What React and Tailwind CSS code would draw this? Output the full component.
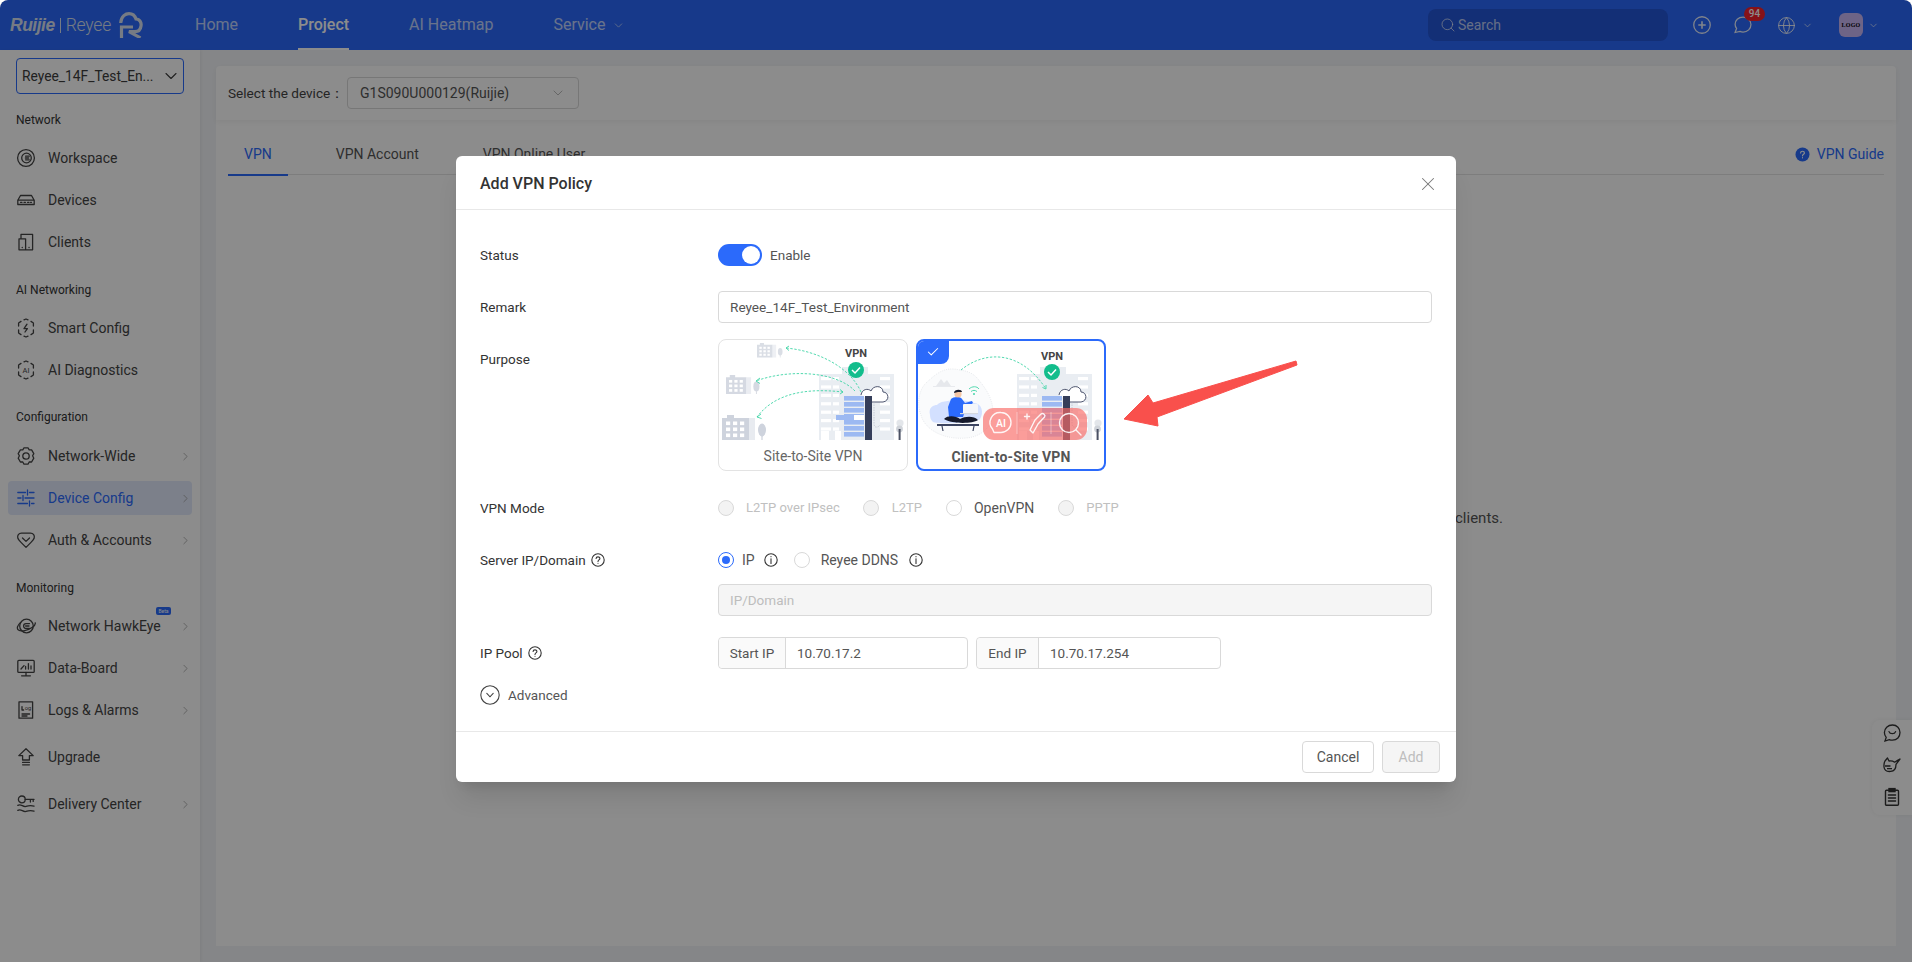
import React from "react";
import { ChevronDown, ChevronRight, Search, X, Check, Globe } from "lucide-react";

const S = ({ children, size = 20 }) => (
  <svg width={size} height={size} viewBox="0 0 20 20" fill="none" stroke="currentColor" strokeWidth="1.3" strokeLinecap="round" strokeLinejoin="round">
    {children}
  </svg>
);

const Hex = ({ children }) => (
  <S>
    <path d="M8 1.8 L10 1 L12 1.8 M15 3.4 L17.4 5 V8 M17.4 12 V15 L15 16.6 M12 18.2 L10 19 L8 18.2 M5 16.6 L2.6 15 V12 M2.6 8 V5 L5 3.4" />
    {children}
  </S>
);

const icons = {
  workspace: (
    <S>
      <circle cx="10" cy="10" r="8.4" />
      <circle cx="10.5" cy="10" r="4.8" />
      <path d="M13.3 8.2 H9.6 M9.4 10 H12.6 M9.6 11.8 H13.3" />
    </S>
  ),
  devices: (
    <S>
      <path d="M4.5 5.5 H15.5 L18.2 10.2 V14.5 H1.8 V10.2 Z M1.8 10.2 H18.2" />
      <path d="M4.5 12.3 H6 M8 12.3 H9.5 M11.5 12.3 H13 M14.5 12.3 H15.5" />
    </S>
  ),
  clients: (
    <S>
      <path d="M5 6 V2.4 H16.6 V17.8 H3 V6.8 H9.6 V17.8" />
      <path d="M6.2 15.5 H6.3 M13 15.5 H13.1" />
    </S>
  ),
  smart: (
    <Hex>
      <path d="M11 6.2 L8 10.6 H11.4 L9 14" />
    </Hex>
  ),
  ai: (
    <Hex>
      <text x="10" y="13" textAnchor="middle" fontSize="7.5" fontFamily="Roboto" stroke="none" fill="currentColor">AI</text>
    </Hex>
  ),
  gear: (
    <S>
      <path d="M8 1.8 H12 L13.2 3.9 L15.6 3.9 L17.8 7.6 L16.6 9.8 L17.8 12.2 L15.6 16 L13.2 16 L12 18.2 H8 L6.8 16 L4.4 16 L2.2 12.2 L3.4 9.8 L2.2 7.6 L4.4 3.9 L6.8 3.9 Z" />
      <circle cx="10" cy="10" r="3.2" />
    </S>
  ),
  sliders: (
    <S>
      <path d="M1.8 4.5 H9.5 M13.5 4.5 H18 M11.5 2 V7 M1.8 10 H5 M9 10 H18 M7 7.5 V12.5 M1.8 15.5 H11.5 M15.5 15.5 H18 M13.5 13 V18" />
    </S>
  ),
  auth: (
    <S>
      <path d="M5.5 3.2 C2.6 3.2 1.2 5.4 1.8 8 C2.2 9.6 3.6 11 5 12.4 L10 17.4 L15 12.4 C16.4 11 17.8 9.6 18.2 8 C18.8 5.4 17.4 3.2 14.5 3.2 Z" />
      <path d="M6.5 8 L10 11.4 L13.5 8" />
    </S>
  ),
  hawk: (
    <S>
      <circle cx="10.5" cy="10" r="6.8" />
      <path d="M13.5 7.6 H10 A2.4 2.4 0 0 0 10 12.4 H13.5 M9.6 10 H13" />
      <path d="M4.6 6.4 C1.4 9.4 0.4 12.6 2.4 14 C5 15.8 12 14.6 16 11.6 C18 10.2 19.6 8.2 19.2 6.8" />
    </S>
  ),
  board: (
    <S>
      <rect x="1.8" y="2.4" width="16.4" height="12" rx="1" />
      <path d="M10 14.4 V17.6 M5.6 17.8 H14.4 M5 11 L8 7.6 M9.6 11 V8.5 M12.4 11 V5.6 M15 11 V8" />
    </S>
  ),
  logs: (
    <S>
      <path d="M3 1.8 H16.6 V18.2 H3 Z" />
      <path d="M6 10 V6.6 M6 10 H7.6 M6 14 H13.6 M6 16 H11" />
      <text x="12" y="10" textAnchor="middle" fontSize="5.8" fontFamily="Roboto" stroke="none" fill="currentColor">og</text>
    </S>
  ),
  upgrade: (
    <S>
      <path d="M10 1.8 L17.2 8.6 H13.4 V13 H6.6 V8.6 H2.8 Z" />
      <path d="M6.6 15.4 H13.4 M6.6 17.8 H13.4" />
    </S>
  ),
  delivery: (
    <S>
      <circle cx="5.8" cy="5.4" r="3.4" />
      <path d="M9.2 5.4 H18 M14.4 5.4 V8 M17.2 5.4 V7.4" />
      <path d="M1.8 11.4 C5 9.4 7 13.4 10 12.4 C13 11.4 15 11.2 18 12.2 M1.8 16.4 C5 14.4 7 18.4 10 17.4 C13 16.4 15 16.2 18 17.2" />
    </S>
  ),
};

const nav = [
  { label: "Network", mt: "mt-[18px]" },
  { text: "Workspace", icon: "workspace", mt: "mt-[13px]" },
  { text: "Devices", icon: "devices", mt: "mt-2" },
  { text: "Clients", icon: "clients", mt: "mt-2" },
  { label: "AI Networking", mt: "mt-[23px]" },
  { text: "Smart Config", icon: "smart", mt: "mt-[13px]" },
  { text: "AI Diagnostics", icon: "ai", mt: "mt-2" },
  { label: "Configuration", mt: "mt-[22px]" },
  { text: "Network-Wide", icon: "gear", mt: "mt-[14px]", more: true },
  { text: "Device Config", icon: "sliders", mt: "mt-2", more: true, active: true },
  { text: "Auth & Accounts", icon: "auth", mt: "mt-2", more: true },
  { label: "Monitoring", mt: "mt-[23px]" },
  { text: "Network HawkEye", icon: "hawk", mt: "mt-[13px]", more: true, beta: true },
  { text: "Data-Board", icon: "board", mt: "mt-2", more: true },
  { text: "Logs & Alarms", icon: "logs", mt: "mt-2", more: true },
  { text: "Upgrade", icon: "upgrade", mt: "mt-[13px]" },
  { text: "Delivery Center", icon: "delivery", mt: "mt-[13px]", more: true },
];

function Sidebar() {
  return (
    <aside className="w-[200px] shrink-0 bg-white px-2 pt-2 flex flex-col shadow-[1px_0_3px_rgba(0,0,0,0.06)]">
      <div className="mx-2 h-9 rounded border border-[#2b6afb] flex items-center pl-[5px] pr-[2px] text-[13.8px] text-[#3c3c3c]">
        <span className="flex-1 whitespace-nowrap">Reyee_14F_Test_En...</span>
        <ChevronDown size={20} strokeWidth={1.3} />
      </div>
      {nav.map((n) =>
        n.label ? (
          <div key={n.label} className={`${n.mt} px-2 h-4 text-[12px] leading-4 text-[#333]`}>{n.label}</div>
        ) : (
          <div
            key={n.text}
            className={`${n.mt} relative h-[34px] shrink-0 rounded flex items-center pl-2 pr-0 text-[14px] ${n.active ? "bg-[#e2e9fb] text-[#2b6afb]" : "text-[#444]"}`}
          >
            <span className="w-5 h-5 flex items-center justify-center">{icons[n.icon]}</span>
            <span className="ml-[12px] flex-1 whitespace-nowrap">{n.text}</span>
            {n.more && <ChevronRight size={13} strokeWidth={1.4} className="text-[#9a9a9a]" />}
            {n.beta && (
              <span className="absolute left-[148px] top-[-2px] w-[15px] h-[8px] rounded-[2px] bg-[#2b6afb] text-white text-[5px] leading-[8px] text-center">Beta</span>
            )}
          </div>
        )
      )}
    </aside>
  );
}

function Header() {
  return (
    <header className="h-[50px] shrink-0 bg-[#2b69fb] rounded-t-[8px] flex items-center text-white">
      <div className="w-[195px] shrink-0 pl-[10px] flex items-center text-[#d8e0f0]">
        <span className="font-['Liberation_Sans',sans-serif] font-bold italic text-[17.5px] tracking-[-0.5px]">Ruijie</span>
        <span className="mx-[5px] w-px h-[15px] bg-[#d8e0f0]" />
        <span className="font-['Roboto',sans-serif] text-[17.5px] tracking-[-0.2px] font-light">Reyee</span>
        <svg width="24" height="26" viewBox="0 0 24 26" fill="none" stroke="currentColor" strokeWidth="3.2" className="ml-[8px] shrink-0">
          <path d="M1.7 11 C2 4 7 1.6 10 1.6 C14 1.6 16 4 17 7 C21 7 22.6 11 22 14 C21.5 18 19 19.6 16 19.6 H10 L21.5 25.8" />
          <path d="M2.5 26 V15 H14" />
        </svg>
      </div>
      <nav className="flex items-center h-full text-[16px]">
        <span className="opacity-70">Home</span>
        <span className="ml-[60px] relative h-full flex items-center font-medium">
          Project
          <span className="absolute bottom-0 left-0 right-0 h-[2px] bg-white" />
        </span>
        <span className="ml-[60px] opacity-70">AI Heatmap</span>
        <span className="ml-[60px] opacity-70 flex items-center gap-[7px]">
          Service <ChevronDown size={13} strokeWidth={1.5} />
        </span>
      </nav>
      <div className="ml-auto w-[240px] h-8 rounded-[8px] bg-[#2356d8] flex items-center pl-[12px] text-[14px] text-white/70">
        <Search size={16} strokeWidth={1.4} />
        <span className="ml-[2px]">Search</span>
      </div>
      <div className="w-[244px] shrink-0 flex items-center relative h-full pl-[25px] text-white/90">
        <svg width="18" height="18" viewBox="0 0 17 17" fill="none" stroke="currentColor" strokeWidth="1.2">
          <circle cx="8.5" cy="8.5" r="7.8" />
          <path d="M8.5 5 V12 M5 8.5 H12" strokeWidth="1.5" />
        </svg>
        <svg width="19" height="18" viewBox="0 0 18 17" fill="none" stroke="currentColor" strokeWidth="1.2" className="ml-[22px]">
          <path d="M9.5 1 C5 1 2 4 2 7.8 C2 9.4 2.5 10.8 3.4 11.8 L2 15.6 L6.6 14.6 C7.6 15 8.5 15.2 9.5 15.2 C13.8 15.2 17 12 17 8 C17 4 13.8 1 9.5 1 Z" />
        </svg>
        <span className="absolute left-[76px] top-[7px] w-[21px] h-[14px] rounded-full bg-[#f5222d] text-white text-[10px] font-medium leading-[14px] text-center">94</span>
        <Globe size={19} strokeWidth={1.2} className="ml-[25px]" />
        <ChevronDown size={11} strokeWidth={1.5} className="ml-[6px]" />
        <span className="ml-[26px] w-6 h-6 rounded-[6px] bg-[#c9b6f5] flex items-center justify-center font-['Liberation_Serif',serif] font-bold text-[6px] text-black tracking-[0.2px]">LOGO</span>
        <ChevronDown size={11} strokeWidth={1.5} className="ml-[5px]" />
      </div>
    </header>
  );
}

function Building({ variant }) {
  const rows = [0, 1, 2, 3, 4, 5, 6];
  return (
    <g>
      <rect x="124" y="28" width="26" height="20" fill="#e9edf2" />
      <rect x="101" y="35" width="75" height="66" fill="#e9edf2" />
      {rows.map((r) => (
        <g key={r} fill="#fff">
          <rect x="103" y={38 + r * 8.4} width="10" height="3.2" />
          <rect x="115" y={38 + r * 8.4} width="6" height="3.2" />
          <rect x="162" y={38 + r * 8.4} width="10" height="3.2" />
        </g>
      ))}
      <rect x="103" y="92" width="8" height="9" fill="#fff" />
      <rect x="117" y="92" width="6" height="9" fill="#fff" />
      <path d="M143 56 C144 50 150 49 153 52 C155 46 165 46 165 53 C171 53 172 62 165 63 H154" fill="#fff" stroke="#3c4460" strokeWidth="0.9" />
      <path d="M156 63 V85 C156 89 160 89 162 86" fill="none" stroke="#b0b6c2" strokeWidth="0.6" strokeDasharray="1.5 1" />
      {[0, 1, 2, 3, 4, 5, 6].map((i) => (
        <rect key={i} x="126" y={57 + i * 6} width="20" height="4.6" fill="#9cb9f2" />
      ))}
      {variant === "site" && (
        <>
          <rect x="118" y="76" width="18" height="5" fill="#9cb9f2" />
          <rect x="136" y="76" width="10" height="5" fill="#fff" />
        </>
      )}
      <rect x="147" y="57" width="7" height="44" fill="#353e5a" />
      <circle cx="182" cy="84" r="3.6" fill="#e3e6ea" />
      <circle cx="181.5" cy="90" r="3.4" fill="#cfd3d9" />
      <rect x="180.6" y="90" width="2" height="11" fill="#4b5164" />
    </g>
  );
}

const TinyBuilding = ({ x, y, s = 1, o = 1 }) => (
  <g transform={`translate(${x} ${y}) scale(${s})`} opacity={o}>
    <rect x="5" y="0" width="7" height="4" fill="#ced3dd" />
    <rect x="0" y="3" width="27" height="22" fill="#ced3dd" />
    <rect x="27" y="3" width="6" height="22" fill="#e8ebf0" />
    {[0, 1, 2].map((r) =>
      [0, 1, 2].map((c) => <rect key={`${r}${c}`} x={4 + c * 7} y={6.5 + r * 6} width="4.2" height="3.6" fill="#fff" />)
    )}
    <ellipse cx="40" cy="15" rx="4" ry="6.5" fill="#ced3dd" />
    <rect x="39.4" y="20" width="1.2" height="5" fill="#ced3dd" />
  </g>
);

function SiteArt() {
  return (
    <svg width="188" height="106" viewBox="1 1 188 106" className="block">
      <Building variant="site" />
      <TinyBuilding x="39" y="4" s="0.58" o="0.75" />
      <TinyBuilding x="8" y="36" s="0.76" o="0.85" />
      <TinyBuilding x="4" y="76" s="1" />
      <g fill="none" stroke="#3fd5a6" strokeWidth="0.9" strokeDasharray="2.4 1.6">
        <path d="M143 53 C132 28 100 12 68 9" />
        <path d="M137 52 C118 32 70 30 38 42" />
        <path d="M125 53 C98 50 60 50 39 78" />
      </g>
      <g fill="none" stroke="#3fd5a6" strokeWidth="0.9">
        <path d="M71 7 L68 9 L71 11.5" />
        <path d="M42 39 L38 42 L42 44.5" />
        <path d="M43 75 L39 78 L43.5 79.5" />
        <path d="M122 50.5 L125 53 L122 55" />
      </g>
      <text x="138" y="18" textAnchor="middle" fontSize="11" fontWeight="700" fontFamily="Roboto" fill="#444">VPN</text>
      <circle cx="138" cy="31" r="8" fill="#12bd8c" />
      <path d="M134 31 L137 34 L142 28.5" fill="none" stroke="#fff" strokeWidth="1.5" />
    </svg>
  );
}

function ClientArt() {
  return (
    <svg width="186" height="106" viewBox="2 2 186 106" className="block">
      <Building />
      <path d="M44 31 C28 27 20 35 10 44 C2 52 1 66 5 76 C9 92 30 101 50 99 C66 98 78 86 77 72 C76 58 70 50 62 40 C56 33 50 32 44 31 Z" fill="#fafbfc" stroke="#d8dbe0" strokeWidth="0.6" strokeDasharray="1 1.2" />
      <path d="M20 47 L25 40 L28 44 L31 41 L35 47 Z" fill="#e6e8ec" />
      <rect x="17" y="47" width="22" height="0.9" fill="#e6e8ec" />
      <path d="M14 76 C12 68 18 66 21 66 C24 60 54 60 58 64 C66 64 68 74 64 80 C60 85 20 85 17 83 C15 81 14 79 14 76 Z" fill="#d3e0ff" />
      <path d="M32 68 L35 60 C37 58 44 57 46 60 L49 64 L56 62 L57 64 L50 69 L47 78 L33 78 Z" fill="#2b6afb" />
      <circle cx="42" cy="55" r="3.6" fill="#f5c6a5" />
      <path d="M38 54 C38 50 46 50 46 53 L42 53 Z" fill="#161a2b" />
      <path d="M28 80 C32 76 40 77 44 80 C50 77 58 77 62 81 C56 85 36 85 28 80 Z" fill="#161a2b" />
      <rect x="47" y="65" width="15" height="10" rx="1" fill="#f4f6fa" />
      <rect x="44" y="74" width="18" height="1.2" fill="#d4d8e0" />
      <rect x="21" y="85" width="42" height="2" fill="#3c4460" />
      <path d="M26 87 L27 92 M58 87 L57 92" stroke="#3c4460" strokeWidth="1.2" />
      <g fill="none" stroke="#3fd5a6" strokeWidth="0.9">
        <path d="M53 50 C56 47 61 47 63 50" />
        <path d="M55 52.5 C57 51 59 51 61 52.5" />
        <circle cx="58" cy="55" r="0.6" fill="#3fd5a6" />
      </g>
      <path d="M45 31 C68 12 104 10 130 50" fill="none" stroke="#3fd5a6" strokeWidth="0.9" strokeDasharray="2.4 1.6" />
      <path d="M126.5 48.5 L130 50 L130 46" fill="none" stroke="#3fd5a6" strokeWidth="0.9" />
      <text x="136" y="21" textAnchor="middle" fontSize="11" fontWeight="700" fontFamily="Roboto" fill="#444">VPN</text>
      <circle cx="136" cy="33" r="8" fill="#12bd8c" />
      <path d="M132 33 L135 36 L140 30.5" fill="none" stroke="#fff" strokeWidth="1.5" />
      <rect x="67" y="69" width="104" height="32" rx="11" fill="#f96a66" opacity="0.66" />
      <g fill="none" stroke="#fff" strokeWidth="1.4" strokeLinecap="round" strokeLinejoin="round" opacity="0.9">
        <path d="M85 73.5 A10 10 0 1 1 85 93.5 H78 L76.5 90 A10 10 0 0 1 85 73.5 Z" />
        <path d="M119 81 L125 75 C127 73.5 130 76 128.5 78 L122 85 L117 94 L114 91 Z" />
        <path d="M111 75 V80 M108.5 77.5 H113.5" />
        <circle cx="153" cy="84" r="9.5" />
        <path d="M160 91 L165 96" />
      </g>
      <path d="M101 73 V95 M135 73 V95" stroke="#fff" strokeWidth="0.8" opacity="0.5" />
      <text x="85" y="88" textAnchor="middle" fontSize="10.5" fontWeight="500" fontFamily="Roboto" fill="#fff">AI</text>
    </svg>
  );
}

const Radio = ({ on, disabled }) => (
  <span className={`w-4 h-4 rounded-full border shrink-0 flex items-center justify-center ${on ? "border-[#2b6afb]" : "border-[#d9d9d9]"} ${disabled ? "bg-[#f3f3f3]" : "bg-white"}`}>
    {on && <span className="w-2 h-2 rounded-full bg-[#2b6afb]" />}
  </span>
);

const Help = ({ q = true, size = 14 }) => (
  <svg width={size} height={size} viewBox="0 0 14 14" fill="none" stroke="#333" strokeWidth="1.1" strokeLinecap="round">
    <circle cx="7" cy="7" r="6.2" />
    {q ? (
      <>
        <path d="M5.1 5.4 C5.1 3.3 8.9 3.3 8.9 5.4 C8.9 6.9 7 6.8 7 8.4" />
        <path d="M7 10.2 V10.3" />
      </>
    ) : (
      <>
        <path d="M7 3.6 V3.7" />
        <path d="M7 5.8 V10.4" />
      </>
    )}
  </svg>
);

const Row = ({ label, extra, className = "", children, top }) => (
  <div className={`flex ${top ? "items-start" : "items-center"} ${className}`}>
    <div className={`w-[238px] shrink-0 flex items-center gap-[5px] text-[13.5px] text-[#333] ${top ? "pt-[10px]" : ""}`}>
      {label}
      {extra}
    </div>
    {children}
  </div>
);

const Addon = ({ label, value, w, addonW }) => (
  <div className="flex h-8 rounded border border-[#d9d9d9] text-[13.5px]" style={{ width: w }}>
    <span className="shrink-0 bg-[#fafafa] border-r border-[#d9d9d9] rounded-l flex items-center justify-center text-[#555]" style={{ width: addonW }}>{label}</span>
    <span className="pl-[11px] flex items-center text-[#555]">{value}</span>
  </div>
);

function Modal() {
  return (
    <div className="relative w-[1000px] h-[626px] bg-white rounded-[6px] shadow-xl flex flex-col">
      <div className="h-[54px] shrink-0 border-b border-[#e8e8e8] flex items-center justify-between pl-6 pr-[17px] pt-[2px]">
        <span className="text-[16px] font-medium text-[#333]">Add VPN Policy</span>
        <X size={22} strokeWidth={1.1} className="text-[#777]" />
      </div>
      <div className="flex-1 px-6 pt-[34px]">
        <Row label="Status">
          <div className="flex items-center h-[22px]">
            <span className="w-11 h-[22px] rounded-full bg-[#2b6afb] flex items-center justify-end pr-[2px]">
              <span className="w-[18px] h-[18px] rounded-full bg-white" />
            </span>
            <span className="ml-2 text-[13.5px] text-[#555]">Enable</span>
          </div>
        </Row>
        <Row label="Remark" className="mt-[25px]">
          <div className="flex-1 h-8 rounded border border-[#d9d9d9] flex items-center pl-[11px] text-[13.6px] text-[#555]">Reyee_14F_Test_Environment</div>
        </Row>
        <Row label="Purpose" className="mt-4" top>
          <div className="flex gap-2">
            <div className="w-[190px] h-[132px] rounded-[8px] border border-[#e3e3e3] overflow-hidden">
              <SiteArt />
              <div className="text-center text-[14px] leading-[20px] text-[#666]">Site-to-Site VPN</div>
            </div>
            <div className="relative w-[190px] h-[132px] rounded-[8px] border-2 border-[#2b6afb] overflow-hidden">
              <ClientArt />
              <div className="text-center text-[14px] leading-[20px] font-bold text-[#555] tracking-[0.15px]">Client-to-Site VPN</div>
              <span className="absolute left-[-1px] top-[-1px] w-[32px] h-[24px] bg-[#2b6afb] rounded-br-[8px] flex items-center justify-center text-white">
                <Check size={14} strokeWidth={1.8} />
              </span>
            </div>
          </div>
        </Row>
        <Row label="VPN Mode" className="mt-[26px] h-[22px]">
          <div className="flex items-center text-[13px]">
            <Radio disabled /><span className="ml-3 text-[#c0c0c0]">L2TP over IPsec</span>
            <span className="ml-[23px]"><Radio disabled /></span><span className="ml-[13px] text-[#c0c0c0]">L2TP</span>
            <span className="ml-[24px]"><Radio /></span><span className="ml-3 text-[14px] text-[#555]">OpenVPN</span>
            <span className="ml-[24px]"><Radio disabled /></span><span className="ml-3 text-[#c0c0c0]">PPTP</span>
          </div>
        </Row>
        <Row label="Server IP/Domain" extra={<Help />} className="mt-[30px] h-[22px]">
          <div className="flex items-center text-[14px] text-[#555]">
            <Radio on /><span className="ml-[8px]">IP</span>
            <span className="ml-[9px]"><Help q={false} /></span>
            <span className="ml-[16px]"><Radio /></span><span className="ml-[11px]">Reyee DDNS</span>
            <span className="ml-[11px]"><Help q={false} /></span>
          </div>
        </Row>
        <div className="ml-[238px] mt-[13px] h-8 rounded border border-[#d9d9d9] bg-[#f5f5f5] flex items-center pl-[11px] text-[13.5px] text-[#bdbdbd]">IP/Domain</div>
        <Row label="IP Pool" extra={<Help />} className="mt-[21px]">
          <div className="flex gap-2">
            <Addon label="Start IP" value="10.70.17.2" w={250} addonW={67} />
            <Addon label="End IP" value="10.70.17.254" w={245} addonW={62} />
          </div>
        </Row>
        <div className="mt-[15px] flex items-center h-[22px] text-[13.5px] text-[#555]">
          <svg width="20" height="20" viewBox="0 0 20 20" fill="none" stroke="#444" strokeWidth="1.1" strokeLinecap="round">
            <circle cx="10" cy="10" r="9.2" />
            <path d="M6.8 8.4 L10 11.8 L13.2 8.4" />
          </svg>
          <span className="ml-2">Advanced</span>
        </div>
      </div>
      <div className="h-[51px] shrink-0 border-t border-[#e8e8e8] flex items-center justify-end pr-4 gap-2 text-[14px]">
        <span className="w-[72px] h-8 rounded border border-[#d9d9d9] flex items-center justify-center text-[#555]">Cancel</span>
        <span className="w-[58px] h-8 rounded border border-[#d9d9d9] bg-[#f5f5f5] flex items-center justify-center text-[#bdbdbd]">Add</span>
      </div>
      <svg width="190" height="80" viewBox="0 0 190 80" className="absolute left-[660px] top-[200px]">
        <path d="M180 5 L37 47 L32 39 L8 63 L42 70 L41 61 L181 9 Z" fill="#f9504c" stroke="#f9504c" strokeWidth="1" strokeLinejoin="round" />
      </svg>
    </div>
  );
}

function Content() {
  return (
    <main className="flex-1 min-w-0 pl-4 pr-4 pt-4 pb-4 flex flex-col">
      <div className="h-[54px] shrink-0 bg-white rounded-t-[4px] px-3 flex items-center text-[14px] text-[#444] shadow-[0_2px_5px_rgba(0,0,0,0.05)] relative">
        <span className="w-[119px] whitespace-nowrap text-[13.6px]">Select the device：</span>
        <span className="w-[232px] h-8 rounded border border-[#d9d9d9] flex items-center pl-[12px] pr-[12px] justify-between text-[#555]">
          G1S090U000129(Ruijie)
          <ChevronDown size={16} strokeWidth={1.2} className="text-[#aaa]" />
        </span>
      </div>
      <div className="flex-1 bg-white px-3 pt-[24px] flex flex-col">
        <div className="h-[31px] shrink-0 border-b border-[#e4e4e4] flex items-start text-[14px] leading-[20px] text-[#555] relative">
          <span className="relative h-[31px] px-4 text-[#2b6afb]">
            VPN
            <span className="absolute left-0 right-0 bottom-[-1px] h-[2px] bg-[#2b6afb]" />
          </span>
          <span className="ml-8 px-4">VPN Account</span>
          <span className="ml-8 px-4">VPN Online User</span>
          <span className="ml-auto flex items-center gap-[7px] text-[#2b6afb]">
            <svg width="15" height="15" viewBox="0 0 15 15">
              <circle cx="7.5" cy="7.5" r="7" fill="#2b6afb" />
              <path d="M5.6 5.9 C5.6 3.7 9.4 3.7 9.4 5.9 C9.4 7.3 7.5 7.2 7.5 8.8 M7.5 10.7 V10.8" fill="none" stroke="#fff" strokeWidth="1.2" strokeLinecap="round" />
            </svg>
            VPN Guide
          </span>
        </div>
        <div className="mt-[332px] flex justify-center">
          <div className="w-[894px] text-right text-[15px] text-[#555]">clients.</div>
        </div>
      </div>
    </main>
  );
}

export default function App() {
  return (
    <div className="relative w-[1912px] h-[962px] overflow-hidden bg-white font-['Roboto',sans-serif]">
      <div className="w-full h-full flex flex-col rounded-t-[8px] overflow-hidden bg-[#f2f4f7]">
        <Header />
        <div className="flex-1 flex min-h-0">
          <Sidebar />
          <Content />
        </div>
      </div>
      <div className="absolute right-0 top-[720px] w-10 h-[95px] rounded-l-[8px] bg-white shadow-[0_0_4px_rgba(0,0,0,0.06)] flex flex-col items-center gap-3 pt-[3px] text-[#333]">
        <svg width="20" height="20" viewBox="0 0 20 20" fill="none" stroke="currentColor" strokeWidth="1.3" strokeLinecap="round">
          <path d="M10.5 2 C5.8 2 2.4 5.4 2.4 9.6 C2.4 11.6 3.2 13.2 4.2 14.4 L3 18 L7.2 16.6 C8.2 17 9.4 17.2 10.5 17.2 C15 17.2 18 13.8 18 9.6 C18 5.4 15 2 10.5 2 Z" />
          <path d="M7 8.6 C8 11.4 12.6 11.4 13.6 8.6" />
        </svg>
        <svg width="20" height="20" viewBox="0 0 20 20" fill="none" stroke="currentColor" strokeWidth="1.3" strokeLinejoin="round">
          <path d="M3 6 L5.5 3 L7 6 C9 5.6 11 6 12.6 7.2 L15.6 5.4 L18 4 L14 9.4 C14 13 12 16 8.6 16.4 C5 16.8 2.4 15 2 12 C1.8 9.6 2 7.8 3 6 Z" />
          <path d="M3 11 H8.5 M5 13.6 H10" />
        </svg>
        <svg width="20" height="20" viewBox="0 0 20 20" fill="none" stroke="currentColor" strokeWidth="1.4" strokeLinecap="round">
          <rect x="3.5" y="3.2" width="13" height="15" rx="1" />
          <rect x="7" y="1.6" width="6" height="3" fill="currentColor" />
          <path d="M6.4 8 H13.6 M6.4 11 H13.6 M6.4 14 H13.6" />
        </svg>
      </div>
      <div className="absolute inset-0 bg-black/45 rounded-t-[8px] flex justify-center items-start pt-[156px]">
        <Modal />
      </div>
    </div>
  );
}
